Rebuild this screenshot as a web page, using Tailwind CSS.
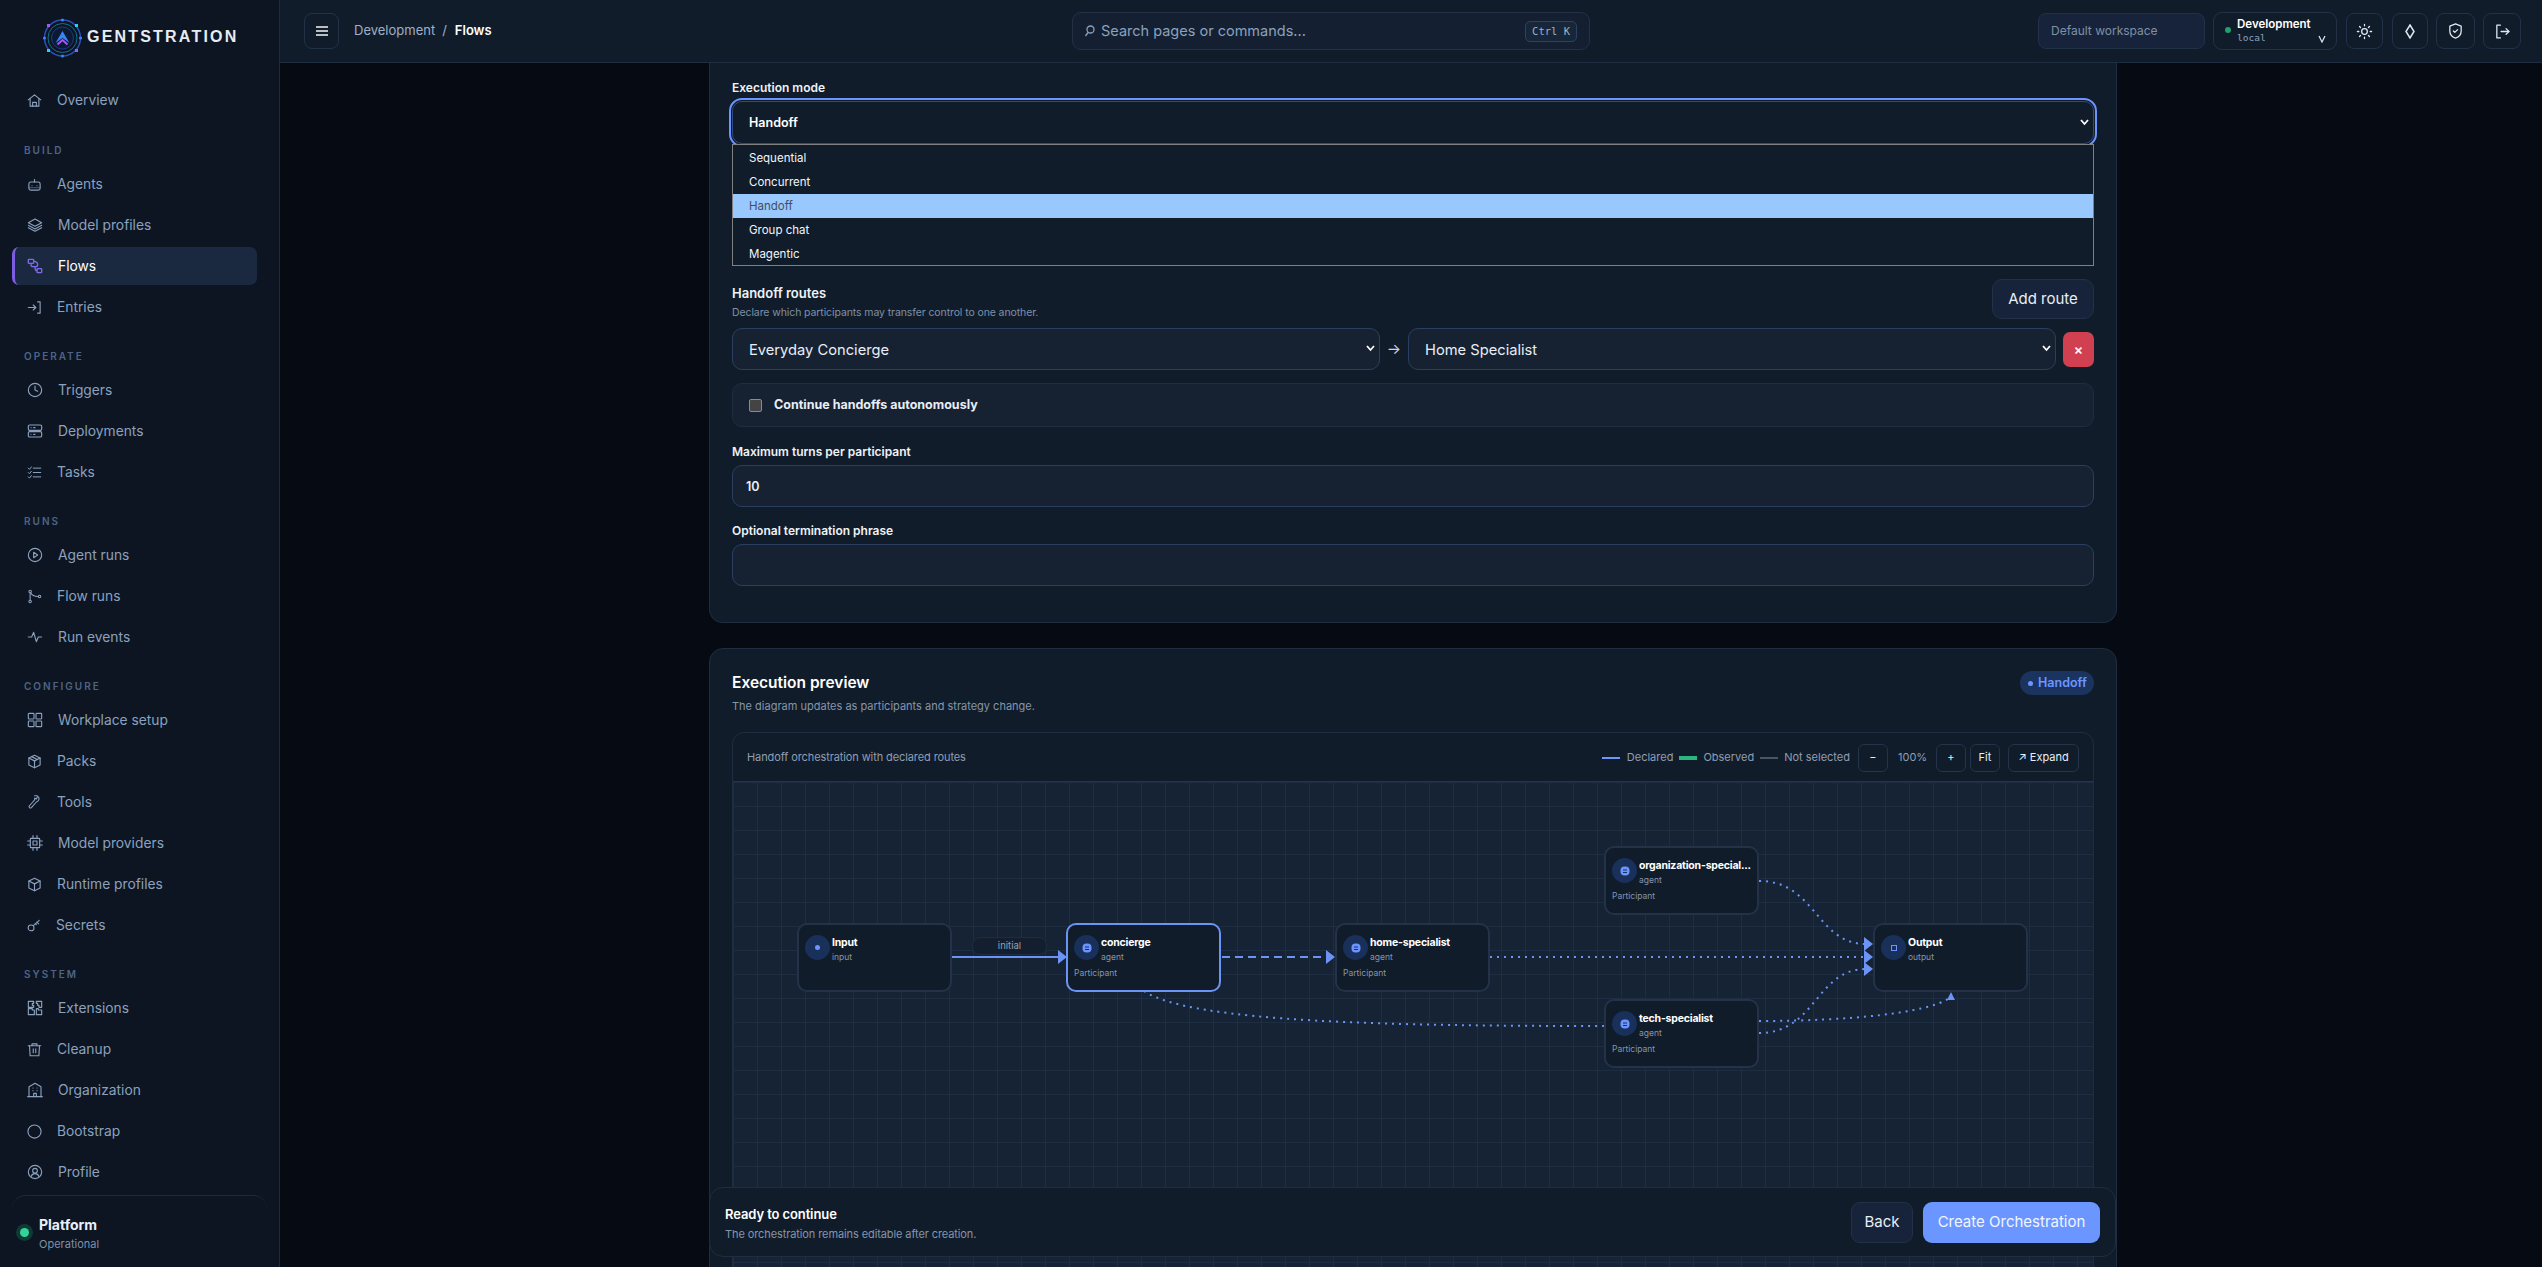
<!DOCTYPE html>
<html lang="en">
  <head>
    <meta charset="UTF-8" />
    <meta name="viewport" content="width=device-width, initial-scale=1.0" />
    <title>Gentstration - Flows</title>
    <script src="https://cdn.jsdelivr.net/npm/@tailwindcss/browser@4"></script>
  </head>
  <body class="bg-[#050a13] text-white font-['Inter',sans-serif] h-screen overflow-hidden">
    <div class="flex h-screen w-full">
      <!-- Sidebar -->
      <aside class="w-[280px] shrink-0 bg-[#0d1523] border-r border-[#1e2a3c] flex flex-col px-[12px] text-[13.800px] text-[#8ba1bd]">
        <div class="h-[81px] flex items-start pl-[30px] pt-[18px] gap-[4px]">
          <svg width="41" height="40" viewBox="0 0 41 40" fill="none">
            <circle cx="20.5" cy="20" r="18" stroke="#2b4fb8" stroke-width="1.5"/>
            <circle cx="20.5" cy="20" r="14.5" stroke="#0e7490" stroke-width="1"/>
            <circle cx="20.5" cy="20" r="11" fill="#0b1a33" stroke="#1e3a8a"/>
            <path d="M13.5 25 20.5 13l7 12-7-5z" fill="#3b82f6"/>
            <path d="M15.5 26.5 20.5 22l5 4.5" stroke="#a855f7" stroke-width="2"/>
            <circle cx="20.5" cy="2" r="1.6" fill="#3b82f6"/><circle cx="20.5" cy="38" r="1.6" fill="#3b82f6"/>
            <circle cx="2.5" cy="20" r="1.6" fill="#3b82f6"/><circle cx="38.5" cy="20" r="1.6" fill="#3b82f6"/>
            <rect x="5" y="6" width="3" height="3" fill="#a855f7"/><rect x="33" y="6" width="3" height="3" fill="#22d3ee"/>
            <rect x="5" y="31" width="3" height="3" fill="#22d3ee"/><rect x="33" y="31" width="3" height="3" fill="#a855f7"/>
          </svg>
          <span class="text-[16px] leading-[38px] font-semibold tracking-[2.200px] text-[#e6ecf3] font-['Liberation_Sans',sans-serif]">GENTSTRATION</span>
        </div>

        <a class="h-[38px] flex items-center pl-[15px] gap-[15px]">
          <svg class="w-[15px] h-[15px] shrink-0" viewBox="0 0 24 24" fill="none" stroke="currentColor" stroke-width="1.8" stroke-linecap="round" stroke-linejoin="round"><path d="M2 11 12 3l10 8"/><path d="M5 9v12h14V9"/><path d="M9 21v-6h6v6"/></svg>
          Overview
        </a>

        <div class="mt-[22px] h-[18px] mb-[6px] pl-[12px] text-[10px] leading-[18px] font-semibold tracking-[0.2em] text-[#4d6483]">BUILD</div>
        <div class="flex flex-col gap-[3px]">
          <a class="h-[38px] flex items-center pl-[15px] gap-[15px]">
            <svg class="w-[15px] h-[15px] shrink-0" viewBox="0 0 24 24" fill="none" stroke="currentColor" stroke-width="1.8" stroke-linecap="round" stroke-linejoin="round"><rect x="3" y="8" width="18" height="13" rx="3"/><path d="M12 8V4"/><path d="M8 14h.01M16 14h.01"/><path d="M3 17h18" opacity=".4"/></svg>
            Agents
          </a>
          <a class="h-[38px] flex items-center pl-[15px] gap-[15px]">
            <svg class="w-[16px] h-[16px] shrink-0" viewBox="0 0 24 24" fill="none" stroke="currentColor" stroke-width="1.6" stroke-linecap="round" stroke-linejoin="round"><path d="M12 3 2 8.5 12 14l10-5.5z"/><path d="m2 12.5 10 5.5 10-5.5"/><path d="m2 16 10 5.5L22 16"/></svg>
            Model profiles
          </a>
          <a class="h-[38px] w-[245px] flex items-center pl-[12px] gap-[15px] bg-[#1a2940] text-white rounded-[7px] border-l-[3px] border-[#7c5ce0]">
            <svg class="w-[16px] h-[16px] shrink-0 text-[#7f6ae8]" viewBox="0 0 24 24" fill="none" stroke="currentColor" stroke-width="2" stroke-linecap="round" stroke-linejoin="round"><rect x="2" y="2" width="8" height="6" rx="1"/><rect x="15" y="16" width="7" height="6" rx="1"/><path d="M10 5c4 0 6 2 6 5 0 2.500-1.500 3-3.500 3H9c-2 0-3-1-3-3V8"/><path d="M12 13c0 3 1 6 3 6"/></svg>
            Flows
          </a>
          <a class="h-[38px] flex items-center pl-[15px] gap-[15px]">
            <svg class="w-[15px] h-[15px] shrink-0" viewBox="0 0 24 24" fill="none" stroke="currentColor" stroke-width="1.8" stroke-linecap="round" stroke-linejoin="round"><path d="M2 12h12"/><path d="m10 8 4 4-4 4"/><path d="M17 3h4v18h-4"/></svg>
            Entries
          </a>
        </div>

        <div class="mt-[21px] h-[18px] mb-[6px] pl-[12px] text-[10px] leading-[18px] font-semibold tracking-[0.2em] text-[#4d6483]">OPERATE</div>
        <div class="flex flex-col gap-[3px]">
          <a class="h-[38px] flex items-center pl-[15px] gap-[15px]">
            <svg class="w-[16px] h-[16px] shrink-0" viewBox="0 0 24 24" fill="none" stroke="currentColor" stroke-width="1.7" stroke-linecap="round" stroke-linejoin="round"><circle cx="12" cy="12" r="10"/><path d="M12 6v6l4 2"/></svg>
            Triggers
          </a>
          <a class="h-[38px] flex items-center pl-[15px] gap-[15px]">
            <svg class="w-[16px] h-[16px] shrink-0" viewBox="0 0 24 24" fill="none" stroke="currentColor" stroke-width="1.7" stroke-linecap="round" stroke-linejoin="round"><rect x="2" y="3" width="20" height="8" rx="2"/><rect x="2" y="13" width="20" height="8" rx="2"/><path d="M6 7h.01M6 17h.01M10 7h2M10 17h2"/></svg>
            Deployments
          </a>
          <a class="h-[38px] flex items-center pl-[15px] gap-[15px]">
            <svg class="w-[15px] h-[15px] shrink-0" viewBox="0 0 24 24" fill="none" stroke="currentColor" stroke-width="1.6" stroke-linecap="round" stroke-linejoin="round"><path d="m2 5 2 2 3-4"/><path d="m2 12 2 2 3-4"/><path d="m2 19 2 2 3-4"/><path d="M10 5h12M10 12h12M10 19h12"/></svg>
            Tasks
          </a>
        </div>

        <div class="mt-[21px] h-[18px] mb-[6px] pl-[12px] text-[10px] leading-[18px] font-semibold tracking-[0.2em] text-[#4d6483]">RUNS</div>
        <div class="flex flex-col gap-[3px]">
          <a class="h-[38px] flex items-center pl-[15px] gap-[15px]">
            <svg class="w-[16px] h-[16px] shrink-0" viewBox="0 0 24 24" fill="none" stroke="currentColor" stroke-width="1.7" stroke-linecap="round" stroke-linejoin="round"><circle cx="12" cy="12" r="10"/><path d="m10 8 6 4-6 4z"/></svg>
            Agent runs
          </a>
          <a class="h-[38px] flex items-center pl-[15px] gap-[15px]">
            <svg class="w-[15px] h-[15px] shrink-0" viewBox="0 0 24 24" fill="none" stroke="currentColor" stroke-width="1.7" stroke-linecap="round" stroke-linejoin="round"><circle cx="5" cy="4" r="2"/><circle cx="5" cy="20" r="2"/><circle cx="20" cy="12" r="2"/><path d="M5 6v12"/><path d="M6 6c2 5 6 6 12 6"/></svg>
            Flow runs
          </a>
          <a class="h-[38px] flex items-center pl-[15px] gap-[15px]">
            <svg class="w-[16px] h-[16px] shrink-0" viewBox="0 0 24 24" fill="none" stroke="currentColor" stroke-width="1.7" stroke-linecap="round" stroke-linejoin="round"><path d="M2 12h5l3-7 4 14 3-7h5"/></svg>
            Run events
          </a>
        </div>

        <div class="mt-[21px] h-[18px] mb-[6px] pl-[12px] text-[10px] leading-[18px] font-semibold tracking-[0.2em] text-[#4d6483]">CONFIGURE</div>
        <div class="flex flex-col gap-[3px]">
          <a class="h-[38px] flex items-center pl-[15px] gap-[15px]">
            <svg class="w-[16px] h-[16px] shrink-0" viewBox="0 0 24 24" fill="none" stroke="currentColor" stroke-width="1.7" stroke-linejoin="round"><rect x="2" y="2" width="8.500" height="8.500" rx="1"/><rect x="13.500" y="2" width="8.500" height="8.500" rx="1"/><rect x="2" y="13.500" width="8.500" height="8.500" rx="1"/><rect x="13.500" y="13.500" width="8.500" height="8.500" rx="1"/></svg>
            Workplace setup
          </a>
          <a class="h-[38px] flex items-center pl-[15px] gap-[15px]">
            <svg class="w-[15px] h-[15px] shrink-0" viewBox="0 0 24 24" fill="none" stroke="currentColor" stroke-width="1.8" stroke-linecap="round" stroke-linejoin="round"><path d="M12 2 3 6.500v11L12 22l9-4.500v-11z"/><path d="m3 6.500 9 4.500 9-4.500"/><path d="M12 11v11"/><path d="m7.500 4.200 9 4.500"/></svg>
            Packs
          </a>
          <a class="h-[38px] flex items-center pl-[15px] gap-[15px]">
            <svg class="w-[15px] h-[16px] shrink-0" viewBox="0 0 24 24" fill="none" stroke="currentColor" stroke-width="1.8" stroke-linecap="round" stroke-linejoin="round"><path d="M12 2h4l3 3c1 3-1 6-4 7L7 21c-2 2-5-1-3-3l7-8c1-1 2-3 1-4l3 1 1-2"/></svg>
            Tools
          </a>
          <a class="h-[38px] flex items-center pl-[15px] gap-[15px]">
            <svg class="w-[16px] h-[16px] shrink-0" viewBox="0 0 24 24" fill="none" stroke="currentColor" stroke-width="1.7" stroke-linecap="round" stroke-linejoin="round"><rect x="5" y="5" width="14" height="14" rx="1"/><rect x="9" y="9" width="6" height="6"/><path d="M9 1v4M15 1v4M9 19v4M15 19v4M1 9h4M1 15h4M19 9h4M19 15h4"/></svg>
            Model providers
          </a>
          <a class="h-[38px] flex items-center pl-[15px] gap-[15px]">
            <svg class="w-[15px] h-[15px] shrink-0" viewBox="0 0 24 24" fill="none" stroke="currentColor" stroke-width="1.8" stroke-linecap="round" stroke-linejoin="round"><path d="M12 2 3 6.500v11L12 22l9-4.500v-11z"/><path d="m3 6.500 9 4.500 9-4.500"/><path d="M12 11v11"/></svg>
            Runtime profiles
          </a>
          <a class="h-[38px] flex items-center pl-[15px] gap-[15px]">
            <svg class="w-[14px] h-[14px] shrink-0" viewBox="0 0 24 24" fill="none" stroke="currentColor" stroke-width="1.8" stroke-linecap="round" stroke-linejoin="round"><circle cx="7" cy="17" r="5"/><path d="m11 13 10-9"/><path d="m17 7 3 3M14 9.500l2 2"/></svg>
            Secrets
          </a>
        </div>

        <div class="mt-[21px] h-[18px] mb-[6px] pl-[12px] text-[10px] leading-[18px] font-semibold tracking-[0.2em] text-[#4d6483]">SYSTEM</div>
        <div class="flex flex-col gap-[3px]">
          <a class="h-[38px] flex items-center pl-[15px] gap-[15px]">
            <svg class="w-[16px] h-[16px] shrink-0" viewBox="0 0 24 24" fill="none" stroke="currentColor" stroke-width="1.7" stroke-linejoin="round"><path d="M2 2h8v3H8v3h2v3H2zM14 2h8v9h-4V8h-2V5h-2zM2 13h6v2h3v7H2zM14 13h3v2h5v7h-8z"/></svg>
            Extensions
          </a>
          <a class="h-[38px] flex items-center pl-[15px] gap-[15px]">
            <svg class="w-[15px] h-[15px] shrink-0" viewBox="0 0 24 24" fill="none" stroke="currentColor" stroke-width="1.8" stroke-linecap="round" stroke-linejoin="round"><path d="M2 6h20"/><path d="M8 6V3h8v3"/><path d="M4 6l1 16h14l1-16"/><path d="M10 11v6M14 11v6"/></svg>
            Cleanup
          </a>
          <a class="h-[38px] flex items-center pl-[15px] gap-[15px]">
            <svg class="w-[16px] h-[16px] shrink-0" viewBox="0 0 24 24" fill="none" stroke="currentColor" stroke-width="1.7" stroke-linecap="round" stroke-linejoin="round"><path d="M1 22h22"/><path d="M3 22V7l9-5 9 5v15"/><path d="M9 9h.01M15 9h.01M9 13h.01M15 13h.01"/><path d="M10 22v-5h4v5"/></svg>
            Organization
          </a>
          <a class="h-[38px] flex items-center pl-[15px] gap-[15px]">
            <svg class="w-[15px] h-[15px] shrink-0" viewBox="0 0 24 24" fill="none" stroke="currentColor" stroke-width="1.8"><circle cx="12" cy="12" r="10.500"/></svg>
            Bootstrap
          </a>
          <a class="h-[38px] flex items-center pl-[15px] gap-[15px]">
            <svg class="w-[16px] h-[16px] shrink-0" viewBox="0 0 24 24" fill="none" stroke="currentColor" stroke-width="1.7" stroke-linecap="round" stroke-linejoin="round"><circle cx="12" cy="12" r="10"/><circle cx="12" cy="10" r="3.500"/><path d="M6 19c1-3 3-4.500 6-4.500s5 1.500 6 4.500"/></svg>
            Profile
          </a>
        </div>

        <div class="mt-[4px] h-[72px] border-t border-[#1e2a3c] rounded-t-[14px] flex items-start pt-[20px] pl-[4px] gap-[6px]">
          <span class="mt-[8px] w-[17px] h-[17px] rounded-full bg-[#0f3a33] flex items-center justify-center shrink-0"><span class="w-[9px] h-[9px] rounded-full bg-[#34d399]"></span></span>
          <div>
            <div class="text-[14px] leading-[17px] font-bold text-[#e8f0fa]">Platform</div>
            <div class="text-[11px] leading-[14px] mt-[4px] text-[#7e91a9]">Operational</div>
          </div>
        </div>
      </aside>

      <main class="flex-1 min-w-0 flex flex-col">
        <!-- Top bar -->
        <header class="h-[63px] shrink-0 bg-[#111c2b] border-b border-[#1f2d40] flex items-center pl-[24px]">
          <div class="w-[768px] shrink-0 flex items-center">
            <button class="w-[35px] h-[36px] rounded-[8px] border border-[#223147] flex items-center justify-center">
              <svg width="12" height="12" viewBox="0 0 12 12" stroke="#f1f5f9" stroke-width="1.500"><path d="M0 2h12M0 6h12M0 10h12"/></svg>
            </button>
            <span class="ml-[15px] text-[13px] text-[#9fb0c5]">Development</span>
            <span class="ml-[7px] text-[13px] text-[#9fb0c5]">/</span>
            <span class="ml-[8px] text-[13px] font-semibold text-white">Flows</span>
          </div>
          <div class="w-[518px] h-[38px] shrink-0 rounded-[9px] border border-[#223147] bg-[#142032] flex items-center pl-[11px] pr-[12px]">
            <svg width="11" height="13" viewBox="0 0 11 13" fill="none" stroke="#8ba1bd" stroke-width="1.300"><circle cx="6.500" cy="4.500" r="3.500"/><path d="M4 7.500 1.500 11"/></svg>
            <span class="ml-[6px] text-[14.500px] text-[#8ba1bd]">Search pages or commands...</span>
            <span class="ml-auto h-[21px] px-[6px] rounded-[5px] border border-[#2e4260] bg-[#18263a] text-[10.500px] leading-[19px] text-[#9fb0c5] font-['DejaVu_Sans_Mono',monospace]">Ctrl K</span>
          </div>
          <div class="ml-[448px] w-[167px] h-[36px] rounded-[8px] border border-[#223147] bg-[#16233a] flex items-center pl-[12px] text-[12px] text-[#7f90a6]">Default workspace</div>
          <div class="ml-[8px] w-[124px] h-[38px] rounded-[9px] border border-[#223147] flex items-center pl-[11px] pb-[2px] relative">
            <span class="w-[6px] h-[6px] rounded-full bg-[#22a06b]"></span>
            <div class="ml-[6px]">
              <div class="text-[11.500px] leading-[14px] font-semibold text-white">Development</div>
              <div class="text-[9.500px] leading-[12px] mt-[1px] text-[#8ba1bd] font-['DejaVu_Sans_Mono',monospace]">local</div>
            </div>
            <svg class="absolute right-[10px] top-[22px]" width="8" height="8" viewBox="0 0 8 8" fill="none" stroke="#e2e8f0" stroke-width="1.200"><path d="m1 1 3 6 3-6"/></svg>
          </div>
          <button class="ml-[9px] w-[37px] h-[36px] rounded-[8px] border border-[#223147] flex items-center justify-center">
            <svg width="17" height="17" viewBox="0 0 24 24" fill="none" stroke="#e2e8f0" stroke-width="1.800" stroke-linecap="round"><circle cx="12" cy="12" r="4"/><path d="M12 2v2M12 20v2M2 12h2M20 12h2M5 5l1.400 1.400M17.600 17.600 19 19M5 19l1.400-1.400M17.600 6.400 19 5"/></svg>
          </button>
          <button class="ml-[9px] w-[36px] h-[36px] rounded-[8px] border border-[#223147] flex items-center justify-center">
            <svg width="10" height="15" viewBox="0 0 10 15" fill="none" stroke="#e2e8f0" stroke-width="1.500"><path d="M5 1 9 7.500 5 14 1 7.500z"/></svg>
          </button>
          <button class="ml-[8px] w-[39px] h-[36px] rounded-[8px] border border-[#223147] flex items-center justify-center">
            <svg width="17" height="18" viewBox="0 0 24 24" fill="none" stroke="#e2e8f0" stroke-width="1.800" stroke-linecap="round" stroke-linejoin="round"><path d="M12 2 4 5v7c0 5 3.500 8.500 8 10 4.500-1.500 8-5 8-10V5z"/><path d="m9 12 2 2 4-4"/></svg>
          </button>
          <button class="ml-[8px] w-[38px] h-[36px] rounded-[8px] border border-[#223147] flex items-center justify-center">
            <svg width="17" height="17" viewBox="0 0 24 24" fill="none" stroke="#e2e8f0" stroke-width="1.800" stroke-linecap="round" stroke-linejoin="round"><path d="M9 3H4v18h5"/><path d="M10 12h11"/><path d="m17 8 4 4-4 4"/></svg>
          </button>
        </header>

        <!-- Scrolled page body -->
        <div class="relative flex-1 overflow-hidden">
          <div class="ml-[429px] w-[1408px]">
            <section class="bg-[#111c2a] border-x border-b border-[#1f2d40] rounded-b-[14px] px-[22px] pt-[17px] pb-[36px]">
              <label class="block text-[12px] leading-[16px] font-semibold text-[#eef2f7]">Execution mode</label>
              <div class="relative mt-[5px]">
                <select class="appearance-none w-full h-[43px] rounded-[10px] bg-[#111c2a] border border-[#2f4a80] outline-2 outline-offset-[1px] outline-[#6b94ff] pl-[16px] pt-[2px] text-[12.500px] font-semibold text-white">
                  <option>Handoff</option>
                </select>
                <svg class="absolute right-[5px] top-[18px]" width="9" height="7" viewBox="0 0 9 7" fill="none" stroke="#fff" stroke-width="1.800"><path d="m1 1 3.500 4L8 1"/></svg>
                <ul class="absolute z-10 top-full left-0 right-0 h-[122px] bg-[#111c2a] border border-[#808080] text-[11.500px] text-[#f1f5f9]">
                  <li class="h-[24px] pl-[16px] leading-[24px] mt-[1px]">Sequential</li>
                  <li class="h-[24px] pl-[16px] leading-[24px]">Concurrent</li>
                  <li class="h-[24px] pl-[16px] leading-[24px] bg-[#99c8ff] text-[#3f4f63]">Handoff</li>
                  <li class="h-[24px] pl-[16px] leading-[24px]">Group chat</li>
                  <li class="h-[24px] pl-[16px] leading-[24px]">Magentic</li>
                </ul>
              </div>

              <div class="mt-[135px] h-[40px] flex items-start justify-between">
                <div class="pt-[6px]">
                  <div class="text-[13px] leading-[16px] font-semibold text-[#eef2f7]">Handoff routes</div>
                  <div class="mt-[5px] text-[10.500px] tracking-[-0.1px] leading-[14px] text-[#7f90a6]">Declare which participants may transfer control to one another.</div>
                </div>
                <button class="w-[102px] h-[40px] rounded-[10px] border border-[#223147] bg-[#16233a] text-[15px] text-[#e8eef6]">Add route</button>
              </div>

              <div class="mt-[9px] flex items-center">
                <div class="relative w-[648px]">
                  <select class="appearance-none w-full h-[42px] rounded-[10px] bg-[#162232] border border-[#2a3f5f] pl-[16px] pt-[2px] text-[14.700px] text-[#e8eef6]">
                    <option>Everyday Concierge</option>
                  </select>
                  <svg class="absolute right-[5px] top-[17px]" width="9" height="7" viewBox="0 0 9 7" fill="none" stroke="#fff" stroke-width="1.800"><path d="m1 1 3.500 4L8 1"/></svg>
                </div>
                <span class="w-[28px] text-center text-[15px] text-[#cbd5e1]">→</span>
                <div class="relative w-[648px]">
                  <select class="appearance-none w-full h-[42px] rounded-[10px] bg-[#162232] border border-[#2a3f5f] pl-[16px] pt-[2px] text-[14.700px] text-[#e8eef6]">
                    <option>Home Specialist</option>
                  </select>
                  <svg class="absolute right-[5px] top-[17px]" width="9" height="7" viewBox="0 0 9 7" fill="none" stroke="#fff" stroke-width="1.800"><path d="m1 1 3.500 4L8 1"/></svg>
                </div>
                <button class="ml-[7px] w-[31px] h-[35px] rounded-[7px] bg-[#d04050] text-[14px] font-semibold text-white">×</button>
              </div>

              <div class="mt-[13px] h-[44px] rounded-[10px] border border-[#1f2d40] bg-[#162232] flex items-center pl-[16px]">
                <input type="checkbox" class="appearance-none w-[13px] h-[13px] rounded-[2px] bg-[#444] border border-[#8a8a8a]" />
                <span class="ml-[12px] text-[12.500px] font-bold text-[#e8eef6]">Continue handoffs autonomously</span>
              </div>

              <label class="block mt-[16px] pt-[1px] text-[12px] leading-[16px] font-semibold text-[#eef2f7]">Maximum turns per participant</label>
              <input value="10" class="block mt-[5px] w-full h-[42px] rounded-[10px] bg-[#162232] border border-[#2a3f5f] px-[13px] pt-[1px] text-[12.500px] font-semibold text-[#e8eef6]" />

              <label class="block mt-[15px] pt-[1px] text-[12px] leading-[16px] font-semibold text-[#eef2f7]">Optional termination phrase</label>
              <input class="block mt-[5px] w-full h-[42px] rounded-[10px] bg-[#162232] border border-[#2a3f5f] px-[13px] text-[12.500px] text-[#e8eef6]" />
            </section>

            <section class="mt-[25px] bg-[#111c2a] border border-[#1f2d40] rounded-[14px] px-[22px] pt-[22px]">
              <div class="flex items-center justify-between h-[24px]">
                <h2 class="text-[15.500px] font-semibold text-white">Execution preview</h2>
                <span class="h-[24px] w-[74px] rounded-full bg-[#1a335f] flex items-center pl-[8px] gap-[5px] text-[12.500px] font-semibold text-[#6c96ff]">
                  <span class="w-[5px] h-[5px] rounded-full bg-[#6c96ff]"></span>Handoff
                </span>
              </div>
              <p class="mt-[3px] text-[11px] leading-[16px] text-[#8595aa]">The diagram updates as participants and strategy change.</p>

              <div class="mt-[18px] rounded-t-[12px] border border-[#1f2d40] overflow-hidden">
                <div class="h-[49px] pt-[1px] border-b border-[#24344a] flex items-center pl-[14px] pr-[14px] text-[11px] text-[#8f9eb2]">
                  <span class="tracking-[-0.1px]">Handoff orchestration with declared routes</span>
                  <span class="ml-auto w-[18px] h-[2px] bg-[#6e95ff]"></span>
                  <span class="ml-[7px]">Declared</span>
                  <span class="ml-[6px] w-[18px] h-[4px] bg-[#2cb67d]"></span>
                  <span class="ml-[6px]">Observed</span>
                  <span class="ml-[6px] w-[18px] h-[2px] bg-[#4b5563]"></span>
                  <span class="ml-[6px]">Not selected</span>
                  <button class="ml-[8px] w-[30px] h-[28px] rounded-[6px] border border-[#24344a] text-[#e8eef6]">−</button>
                  <span class="ml-[10px] w-[28px] text-center">100%</span>
                  <button class="ml-[10px] w-[30px] h-[28px] rounded-[6px] border border-[#24344a] text-[#e8eef6]">+</button>
                  <button class="ml-[4px] w-[30px] h-[28px] rounded-[6px] border border-[#24344a] text-[#e8eef6]">Fit</button>
                  <button class="ml-[8px] w-[71px] h-[28px] rounded-[6px] border border-[#24344a] text-[#e8eef6]">↗ Expand</button>
                </div>

                <!-- diagram canvas: nodes and edges sit at their own coordinates -->
                <div class="relative h-[600px] bg-[#162334] bg-[linear-gradient(#1e2d41_1px,transparent_1px),linear-gradient(90deg,#1e2d41_1px,transparent_1px)] bg-size-[24px_24px]">
                  <svg class="absolute left-0 top-0" width="1360" height="600" viewBox="733 781 1360 600" fill="none" stroke="#6b94f5">
                    <path d="M952 956H1060" stroke-width="2"/>
                    <path d="M1222 956H1328" stroke-width="2" stroke-dasharray="8 5"/>
                    <path d="M1490 956H1866" stroke-width="2" stroke-dasharray="2 5"/>
                    <path d="M1759 880C1816 880 1816 943 1866 943" stroke-width="2" stroke-dasharray="2 5"/>
                    <path d="M1759 1032C1816 1032 1816 968 1866 968" stroke-width="2" stroke-dasharray="2 5"/>
                    <path d="M1144 990C1190 1022 1400 1025 1604 1025" stroke-width="2" stroke-dasharray="2 5"/>
                    <path d="M1759 1020C1850 1020 1925 1012 1948 998" stroke-width="2" stroke-dasharray="2 5"/>
                    <g fill="#6b94f5" stroke="none">
                      <path d="M1058 949 1067 956 1058 963z"/>
                      <path d="M1326 949 1335 956 1326 963z"/>
                      <path d="M1864 936 1873 943 1864 950z"/>
                      <path d="M1864 949 1873 956 1864 963z"/>
                      <path d="M1864 961 1873 968 1864 975z"/>
                      <path d="M1947 999 1951 991 1955 999z"/>
                    </g>
                  </svg>

                  <span class="absolute left-[239px] top-[155px] w-[75px] h-[18px] rounded-[8px] bg-[#131f2e] border border-[#1f2d42] text-center text-[9.500px] leading-[16px] text-[#94a3b8]">initial</span>

                  <div class="absolute left-[64px] top-[141px] w-[155px] h-[69px] rounded-[10px] bg-[#111c2a] border-2 border-[#243249]">
                    <div class="flex items-start pl-[6px] pt-[10px]">
                      <span class="w-[25px] h-[25px] rounded-full bg-[#18305a] flex items-center justify-center shrink-0"><span class="w-[5px] h-[5px] rounded-full bg-[#6b94ff]"></span></span>
                      <div class="ml-[2px] pt-[1px]">
                        <div class="text-[10.500px] tracking-[-0.2px] leading-[14px] font-bold text-white">Input</div>
                        <div class="text-[8.500px] leading-[12px] mt-[1px] text-[#8595aa]">input</div>
                      </div>
                    </div>
                  </div>

                  <div class="absolute left-[333px] top-[141px] w-[155px] h-[69px] rounded-[10px] bg-[#111c2a] border-2 border-[#6b94f5]">
                    <div class="flex items-start pl-[6px] pt-[10px]">
                      <span class="w-[25px] h-[25px] rounded-full bg-[#18305a] flex items-center justify-center shrink-0"><svg width="10" height="10" viewBox="0 0 10 10"><rect x="0.500" y="0.500" width="9" height="9" rx="4" fill="#6b94ff"/><path d="M3 4h4M3 6.500h4" stroke="#18305a"/></svg></span>
                      <div class="ml-[2px] pt-[1px]">
                        <div class="text-[10.500px] tracking-[-0.2px] leading-[14px] font-bold text-white">concierge</div>
                        <div class="text-[8.500px] leading-[12px] mt-[1px] text-[#8595aa]">agent</div>
                      </div>
                    </div>
                    <div class="pl-[6px] mt-[4px] text-[8.500px] leading-[12px] text-[#8595aa]">Participant</div>
                  </div>

                  <div class="absolute left-[602px] top-[141px] w-[155px] h-[69px] rounded-[10px] bg-[#111c2a] border-2 border-[#243249]">
                    <div class="flex items-start pl-[6px] pt-[10px]">
                      <span class="w-[25px] h-[25px] rounded-full bg-[#18305a] flex items-center justify-center shrink-0"><svg width="10" height="10" viewBox="0 0 10 10"><rect x="0.500" y="0.500" width="9" height="9" rx="4" fill="#6b94ff"/><path d="M3 4h4M3 6.500h4" stroke="#18305a"/></svg></span>
                      <div class="ml-[2px] pt-[1px]">
                        <div class="text-[10.500px] tracking-[-0.2px] leading-[14px] font-bold text-white">home-specialist</div>
                        <div class="text-[8.500px] leading-[12px] mt-[1px] text-[#8595aa]">agent</div>
                      </div>
                    </div>
                    <div class="pl-[6px] mt-[4px] text-[8.500px] leading-[12px] text-[#8595aa]">Participant</div>
                  </div>

                  <div class="absolute left-[871px] top-[64px] w-[155px] h-[69px] rounded-[10px] bg-[#111c2a] border-2 border-[#243249]">
                    <div class="flex items-start pl-[6px] pt-[10px]">
                      <span class="w-[25px] h-[25px] rounded-full bg-[#18305a] flex items-center justify-center shrink-0"><svg width="10" height="10" viewBox="0 0 10 10"><rect x="0.500" y="0.500" width="9" height="9" rx="4" fill="#6b94ff"/><path d="M3 4h4M3 6.500h4" stroke="#18305a"/></svg></span>
                      <div class="ml-[2px] pt-[1px] min-w-0">
                        <div class="text-[10.500px] tracking-[-0.2px] leading-[14px] font-bold text-white whitespace-nowrap">organization-special...</div>
                        <div class="text-[8.500px] leading-[12px] mt-[1px] text-[#8595aa]">agent</div>
                      </div>
                    </div>
                    <div class="pl-[6px] mt-[4px] text-[8.500px] leading-[12px] text-[#8595aa]">Participant</div>
                  </div>

                  <div class="absolute left-[871px] top-[217px] w-[155px] h-[69px] rounded-[10px] bg-[#111c2a] border-2 border-[#243249]">
                    <div class="flex items-start pl-[6px] pt-[10px]">
                      <span class="w-[25px] h-[25px] rounded-full bg-[#18305a] flex items-center justify-center shrink-0"><svg width="10" height="10" viewBox="0 0 10 10"><rect x="0.500" y="0.500" width="9" height="9" rx="4" fill="#6b94ff"/><path d="M3 4h4M3 6.500h4" stroke="#18305a"/></svg></span>
                      <div class="ml-[2px] pt-[1px]">
                        <div class="text-[10.500px] tracking-[-0.2px] leading-[14px] font-bold text-white">tech-specialist</div>
                        <div class="text-[8.500px] leading-[12px] mt-[1px] text-[#8595aa]">agent</div>
                      </div>
                    </div>
                    <div class="pl-[6px] mt-[4px] text-[8.500px] leading-[12px] text-[#8595aa]">Participant</div>
                  </div>

                  <div class="absolute left-[1140px] top-[141px] w-[155px] h-[69px] rounded-[10px] bg-[#111c2a] border-2 border-[#243249]">
                    <div class="flex items-start pl-[6px] pt-[10px]">
                      <span class="w-[25px] h-[25px] rounded-full bg-[#18305a] flex items-center justify-center shrink-0"><span class="w-[6px] h-[6px] border border-[#6b94ff]"></span></span>
                      <div class="ml-[2px] pt-[1px]">
                        <div class="text-[10.500px] tracking-[-0.2px] leading-[14px] font-bold text-white">Output</div>
                        <div class="text-[8.500px] leading-[12px] mt-[1px] text-[#8595aa]">output</div>
                      </div>
                    </div>
                  </div>
                </div>
              </div>
            </section>
          </div>

          <!-- Sticky action bar over the page -->
          <div class="absolute left-[429px] bottom-[10px] w-[1407px] h-[70px] rounded-[14px] bg-[#111c2a] border border-[#1f2d40] flex items-center pl-[15px] pr-[15px]">
            <div class="pt-[3px]">
              <div class="text-[13px] tracking-[-0.1px] leading-[16px] font-semibold text-white">Ready to continue</div>
              <div class="mt-[4px] text-[11px] tracking-[-0.1px] leading-[16px] text-[#8595aa]">The orchestration remains editable after creation.</div>
            </div>
            <button class="ml-auto w-[62px] h-[41px] rounded-[9px] border border-[#223147] bg-[#16233a] text-[15px] text-[#e8eef6]">Back</button>
            <button class="ml-[10px] w-[177px] h-[41px] rounded-[9px] bg-[#6b96ff] text-[15px] text-[#f1f5ff]">Create Orchestration</button>
          </div>
        </div>
      </main>
    </div>
  </body>
</html>
